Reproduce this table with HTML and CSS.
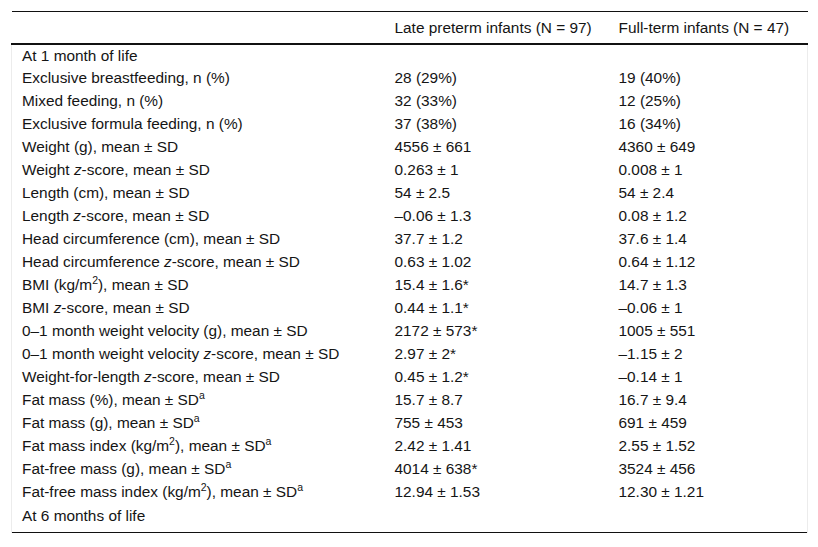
FILE: index.html
```html
<!DOCTYPE html>
<html>
<head>
<meta charset="utf-8">
<link rel="stylesheet" href="styles.css">
</head>
<body>
<table class="data">
  <colgroup>
    <col class="c1"><col class="c2"><col class="c3">
  </colgroup>
  <thead>
    <tr><th></th><th>Late preterm infants (N = 97)</th><th>Full-term infants (N = 47)</th></tr>
  </thead>
  <tbody>
    <tr><td>At 1 month of life</td><td></td><td></td></tr>
    <tr><td>Exclusive breastfeeding, n (%)</td><td>28 (29%)</td><td>19 (40%)</td></tr>
    <tr><td>Mixed feeding, n (%)</td><td>32 (33%)</td><td>12 (25%)</td></tr>
    <tr><td>Exclusive formula feeding, n (%)</td><td>37 (38%)</td><td>16 (34%)</td></tr>
    <tr><td>Weight (g), mean ± SD</td><td>4556 ± 661</td><td>4360 ± 649</td></tr>
    <tr><td>Weight <i>z</i>-score, mean ± SD</td><td>0.263 ± 1</td><td>0.008 ± 1</td></tr>
    <tr><td>Length (cm), mean ± SD</td><td>54 ± 2.5</td><td>54 ± 2.4</td></tr>
    <tr><td>Length <i>z</i>-score, mean ± SD</td><td>–0.06 ± 1.3</td><td>0.08 ± 1.2</td></tr>
    <tr><td>Head circumference (cm), mean ± SD</td><td>37.7 ± 1.2</td><td>37.6 ± 1.4</td></tr>
    <tr><td>Head circumference <i>z</i>-score, mean ± SD</td><td>0.63 ± 1.02</td><td>0.64 ± 1.12</td></tr>
    <tr><td>BMI (kg/m<sup>2</sup>), mean ± SD</td><td>15.4 ± 1.6*</td><td>14.7 ± 1.3</td></tr>
    <tr><td>BMI <i>z</i>-score, mean ± SD</td><td>0.44 ± 1.1*</td><td>–0.06 ± 1</td></tr>
    <tr><td>0–1 month weight velocity (g), mean ± SD</td><td>2172 ± 573*</td><td>1005 ± 551</td></tr>
    <tr><td>0–1 month weight velocity <i>z</i>-score, mean ± SD</td><td>2.97 ± 2*</td><td>–1.15 ± 2</td></tr>
    <tr><td>Weight-for-length <i>z</i>-score, mean ± SD</td><td>0.45 ± 1.2*</td><td>–0.14 ± 1</td></tr>
    <tr><td>Fat mass (%), mean ± SD<sup>a</sup></td><td>15.7 ± 8.7</td><td>16.7 ± 9.4</td></tr>
    <tr><td>Fat mass (g), mean ± SD<sup>a</sup></td><td>755 ± 453</td><td>691 ± 459</td></tr>
    <tr><td>Fat mass index (kg/m<sup>2</sup>), mean ± SD<sup>a</sup></td><td>2.42 ± 1.41</td><td>2.55 ± 1.52</td></tr>
    <tr><td>Fat-free mass (g), mean ± SD<sup>a</sup></td><td>4014 ± 638*</td><td>3524 ± 456</td></tr>
    <tr><td>Fat-free mass index (kg/m<sup>2</sup>), mean ± SD<sup>a</sup></td><td>12.94 ± 1.53</td><td>12.30 ± 1.21</td></tr>
    <tr class="last"><td>At 6 months of life</td><td></td><td></td></tr>
  </tbody>
</table>
</body>
</html>
```

FILE: styles.css
```css
html, body {
  margin: 0;
  padding: 0;
  background: #fff;
}
body {
  padding: 11px 0 0 11px;
  font-family: "Liberation Sans", Arial, sans-serif;
  font-size: 15.4px;
  color: #151515;
}
.data {
  width: 796px;
  border-collapse: collapse;
  table-layout: fixed;
  border-top: 1px solid #111;
  border-bottom: 1px solid #111;
}
.c1 { width: 373px; }
.c2 { width: 224px; }
.c3 { width: 199px; }
.data th {
  font-weight: normal;
  text-align: left;
  height: 32px;
  padding: 1px 10px 0;
  box-sizing: border-box;
  line-height: 18px;
  vertical-align: middle;
  border-bottom: 2px solid #111;
}
.data td {
  padding: 2px 10px;
  line-height: 18px;
  height: 23px;
  box-sizing: border-box;
  vertical-align: middle;
  white-space: nowrap;
}
.data tbody td:first-child { border-left: 1px solid #ececec; }
.data tbody td:last-child { border-right: 1px solid #ececec; }
.data tbody tr.last td { height: 29px; padding-top: 3px; padding-bottom: 6px; }
.data sup {
  font-size: 10.5px;
  line-height: 0;
  vertical-align: 6px;
}
```
